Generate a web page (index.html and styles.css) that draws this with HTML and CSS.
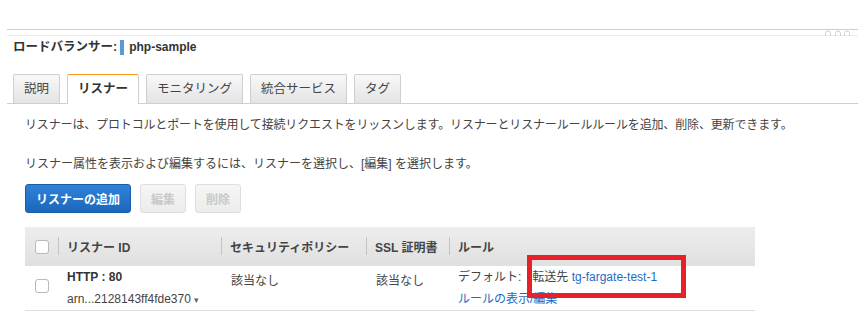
FILE: index.html
```html
<!DOCTYPE html>
<html lang="ja">
<head>
<meta charset="utf-8">
<title>ロードバランサー</title>
<link rel="stylesheet" href="styles.css">
</head>
<body>
<div class="page">
  <div class="toprule"></div>
  <div class="subrule">
    <svg class="grip" width="30" height="6" viewBox="0 0 30 6" aria-hidden="true">
      <path d="M2.5 6 V3.5 A2.5 2.5 0 0 1 7.5 3.5 V6" fill="none" stroke="#cfcfcf" stroke-width="1"/>
      <path d="M12.5 6 V3.5 A2.5 2.5 0 0 1 17.5 3.5 V6" fill="none" stroke="#cfcfcf" stroke-width="1"/>
      <path d="M21.5 6 V3.5 A2.5 2.5 0 0 1 26.5 3.5 V6" fill="none" stroke="#cfcfcf" stroke-width="1"/>
    </svg>
  </div>
  <h1 class="title">ロードバランサー:<span class="bar"></span><span class="lbname">php-sample</span></h1>
  <div class="tabs">
    <div class="tab">説明</div>
    <div class="tab active">リスナー</div>
    <div class="tab">モニタリング</div>
    <div class="tab">統合サービス</div>
    <div class="tab">タグ</div>
  </div>
  <div class="content">
    <p class="desc first">リスナーは、プロトコルとポートを使用して接続リクエストをリッスンします。リスナーとリスナールールルールを追加、削除、更新できます。</p>
    <p class="desc second">リスナー属性を表示および編集するには、リスナーを選択し、[編集] を選択します。</p>
    <div class="actions">
      <button class="btn primary">リスナーの追加</button>
      <button class="btn disabled">編集</button>
      <button class="btn disabled">削除</button>
    </div>
    <div class="table">
      <div class="thead">
        <div class="th c-check"><span class="check"></span></div>
        <div class="th c-id sep">リスナー ID</div>
        <div class="th c-sec sep">セキュリティポリシー</div>
        <div class="th c-ssl sep">SSL 証明書</div>
        <div class="th c-rule sep">ルール</div>
      </div>
      <div class="trow">
        <div class="td c-check"><span class="check"></span></div>
        <div class="td c-id">
          <div class="strong">HTTP : 80</div>
          <div class="arn">arn...2128143ff4fde370 <span class="caret">▾</span></div>
        </div>
        <div class="td c-sec plain">該当なし</div>
        <div class="td c-ssl plain">該当なし</div>
        <div class="td c-rule">
          <div>デフォルト:<span class="hl">転送先 <a class="link">tg-fargate-test-1</a></span></div>
          <div><a class="link">ルールの表示/編集</a></div>
        </div>
      </div>
    </div>
  </div>
</div>
</body>
</html>
```

FILE: styles.css
```css
* { box-sizing: border-box; }
html, body { margin: 0; padding: 0; background: #fff; }
body {
  font-family: "Liberation Sans", "Noto Sans CJK JP", sans-serif;
  font-size: 12px;
  color: #444;
}
.page { width: 858px; height: 325px; overflow: hidden; }

.toprule {
  margin: 29px 0 0 7px;
  border-top: 1px solid #cfcfcf;
}
.subrule {
  position: relative;
  margin: 5px 0 0 7px;
  border-top: 1px solid #ececec;
}
.grip { position: absolute; right: 5px; top: -6px; }

.title {
  margin: 0 0 0 13px;
  height: 22px;
  line-height: 22px;
  font-size: 12.5px;
  font-weight: bold;
  color: #333;
  display: flex;
  align-items: center;
}
.bar {
  display: inline-block;
  width: 4px;
  height: 15px;
  background: #5b9bd5;
  margin: 0 5px 0 3px;
}
.lbname { font-weight: bold; font-size: 12px; }

.tabs {
  margin: 16px 0 0 7px;
  padding-left: 6px;
  display: flex;
  gap: 7px;
  border-bottom: 1px solid #cfcfcf;
  height: 30px;
}
.tab {
  height: 29px;
  padding: 0 10px;
  line-height: 28px;
  font-size: 12.5px;
  color: #444;
  border: 1px solid #cfcfcf;
  border-bottom: none;
  border-radius: 2px 2px 0 0;
  background: linear-gradient(#f8f8f8, #e4e4e4);
}
.tab.active {
  height: 30px;
  background: #fff;
  border-top: 1px solid #f29a1a;
  font-weight: bold;
  color: #333;
}

.content { padding-left: 25px; }
.desc { margin: 0; line-height: 18px; }
.desc.first { margin-top: 12px; letter-spacing: -0.15px; }
.desc.second { margin-top: 21px; }

.actions { display: flex; gap: 9px; margin-top: 11px; }
.btn {
  font-family: inherit;
  font-size: 12px;
  font-weight: bold;
  height: 29px;
  border-radius: 3px;
  padding: 0 10px;
  cursor: default;
}
.btn.primary {
  color: #fff;
  background: linear-gradient(#2f83d6, #1b67bd);
  border: 1px solid #1a5ea8;
}
.btn.disabled {
  color: #c8c8c8;
  background: linear-gradient(#f6f6f6, #ececec);
  border: 1px solid #dedede;
}

.table { margin-top: 14px; width: 730px; }
.thead {
  display: flex;
  height: 39px;
  background: linear-gradient(#ededed, #e0e0e0);
  font-weight: bold;
  color: #444;
}
.th {
  position: relative;
  display: flex;
  align-items: center;
  padding-left: 9px;
}
.th.sep::before {
  content: "";
  position: absolute;
  left: 0;
  top: 10px;
  height: 18px;
  border-left: 1px solid #c4c4c4;
}
.c-check { width: 33px; padding-left: 10px !important; }
.c-id { width: 163px; }
.c-sec { width: 145px; }
.c-ssl { width: 83px; }
.c-rule { width: 306px; }

.check {
  display: inline-block;
  width: 14px;
  height: 14px;
  border: 1px solid #b9b9b9;
  border-radius: 3px;
  background: #fff;
}

.trow {
  display: flex;
  height: 45px;
  border-bottom: 1px solid #ddd;
}
.td { padding-left: 9px; line-height: 22px; }
.td.c-check { padding-top: 13px; line-height: 0; }
.td.plain { padding-top: 4px; }
.td.c-sec, .td.c-ssl { padding-left: 10px; }
.strong { font-weight: bold; color: #333; }
.arn { color: #444; }
.caret { font-size: 9px; color: #666; }

.link { color: #1d6cc0; text-decoration: none; }
.hl {
  position: relative;
  display: inline-block;
  vertical-align: top;
  line-height: 22px;
  margin-left: 11px;
}
.hl::after {
  content: "";
  position: absolute;
  left: -5px;
  top: -11px;
  width: 149px;
  height: 33px;
  border: 5px solid #e8202a;
}
```
